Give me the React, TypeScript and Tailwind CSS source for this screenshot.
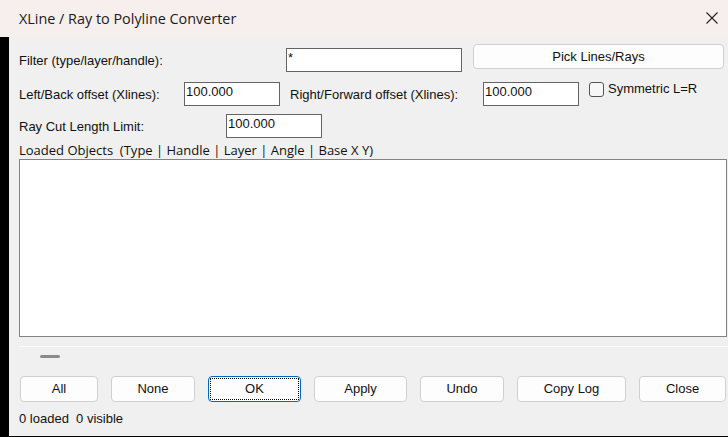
const sans = "font-['Liberation_Sans',Arial,sans-serif]"
const ui = "font-['Open_Sans','Noto_Sans',sans-serif]"

function TextBox({ value, width }: { value: string; width: string }) {
    return (
        <div className={`${width} h-[24px] shrink-0 border border-[#646464] bg-white px-[1px] pt-[1px] text-[13px] leading-[16px] text-[#111] ${sans}`}>
            {value}
        </div>
    )
}

function Button({ label, width, focused }: { label: string; width: string; focused?: boolean }) {
    if (focused) {
        return (
            <div className={`${width} h-[26px] shrink-0 rounded-[4px] border border-[#0067c0] bg-[#fdfdfd] p-[1px]`}>
                <div className={`flex h-full items-center justify-center border border-dotted border-black text-[13px] text-[#111] ${sans}`}>{label}</div>
            </div>
        )
    }
    return (
        <div className={`${width} flex h-[26px] shrink-0 items-center justify-center rounded-[4px] border border-[#d0d0d0] bg-[#fdfdfd] text-[13px] text-[#111] ${sans}`}>
            {label}
        </div>
    )
}

export default function App() {
    return (
        <div className="flex h-[437px] w-[728px] flex-col overflow-hidden bg-black">
            {/* window caption */}
            <div className="flex h-[37px] shrink-0 items-center justify-between bg-[#f7efee] pl-[19px] pr-[8px]">
                <span className={`text-[14.4px] text-[#1a1a1a] ${ui}`}>XLine / Ray to Polyline Converter</span>
                <svg width="12" height="12" viewBox="0 0 12 12" className="mr-[2px] mb-[1px]">
                    <path d="M0.5 0.5 L11.5 11.5 M11.5 0.5 L0.5 11.5" stroke="#222" strokeWidth="1.1" />
                </svg>
            </div>

            <div className="flex flex-1">
                <div className="w-[9px] shrink-0 bg-black" />
                <main className={`flex flex-1 flex-col bg-[#f0f0f0] pl-[10px] text-[13px] text-[#111] ${sans}`}>
                    {/* filter row */}
                    <div className="mt-[7px] flex items-start">
                        <span className="mt-[9px] w-[267px] shrink-0 leading-[16px]">Filter (type/layer/handle):</span>
                        <div className="mt-[4px]">
                            <TextBox value="*" width="w-[176px]" />
                        </div>
                        <div className="ml-[11px] flex h-[25px] w-[251px] items-center justify-center rounded-[4px] border border-[#d0d0d0] bg-[#fdfdfd]">
                            Pick Lines/Rays
                        </div>
                    </div>

                    {/* offsets row */}
                    <div className="mt-[10px] flex items-start">
                        <span className="mt-[5px] w-[165px] shrink-0 leading-[16px]">Left/Back offset (Xlines):</span>
                        <TextBox value="100.000" width="w-[96px]" />
                        <span className="ml-[10px] mt-[5px] w-[193px] shrink-0 leading-[16px]">Right/Forward offset (Xlines):</span>
                        <TextBox value="100.000" width="w-[96px]" />
                        <div className="ml-[10px] flex items-start gap-[4px]">
                            <div className="h-[15px] w-[15px] rounded-[3px] border border-[#555] bg-[#f7f7f7]" />
                            <span className="-mt-[1px] leading-[16px]">Symmetric L=R</span>
                        </div>
                    </div>

                    {/* ray cut row */}
                    <div className="mt-[8px] flex items-start">
                        <span className="mt-[5px] w-[207px] shrink-0 leading-[16px]">Ray Cut Length Limit:</span>
                        <TextBox value="100.000" width="w-[96px]" />
                    </div>

                    <span className={`mt-[5px] h-[15px] text-[13px] leading-[15px] ${ui}`}>Loaded Objects&nbsp; (Type | Handle | Layer | Angle | Base X Y)</span>
                    <div className="mt-[1px] h-[178px] w-[708px] border border-[#828282] bg-white" />

                    {/* splitter */}
                    <div className="mt-[9px] h-px w-full bg-[#fbfbfb]" />
                    <div className="ml-[21px] mt-[8px] h-[3px] w-[20px] rounded-full bg-[#8a8a8a]" />

                    {/* action buttons */}
                    <div className="ml-px mt-[18px] flex gap-[13px]">
                        <Button label="All" width="w-[78px]" />
                        <Button label="None" width="w-[84px]" />
                        <Button label="OK" width="w-[93px]" focused />
                        <Button label="Apply" width="w-[93px]" />
                        <Button label="Undo" width="w-[84px]" />
                        <Button label="Copy Log" width="w-[109px]" />
                        <Button label="Close" width="w-[87px]" />
                    </div>

                    <span className="mt-[9px] leading-[16px]">0 loaded&nbsp; 0 visible</span>
                </main>
            </div>
            <div className="h-px shrink-0 bg-black" />
        </div>
    )
}
